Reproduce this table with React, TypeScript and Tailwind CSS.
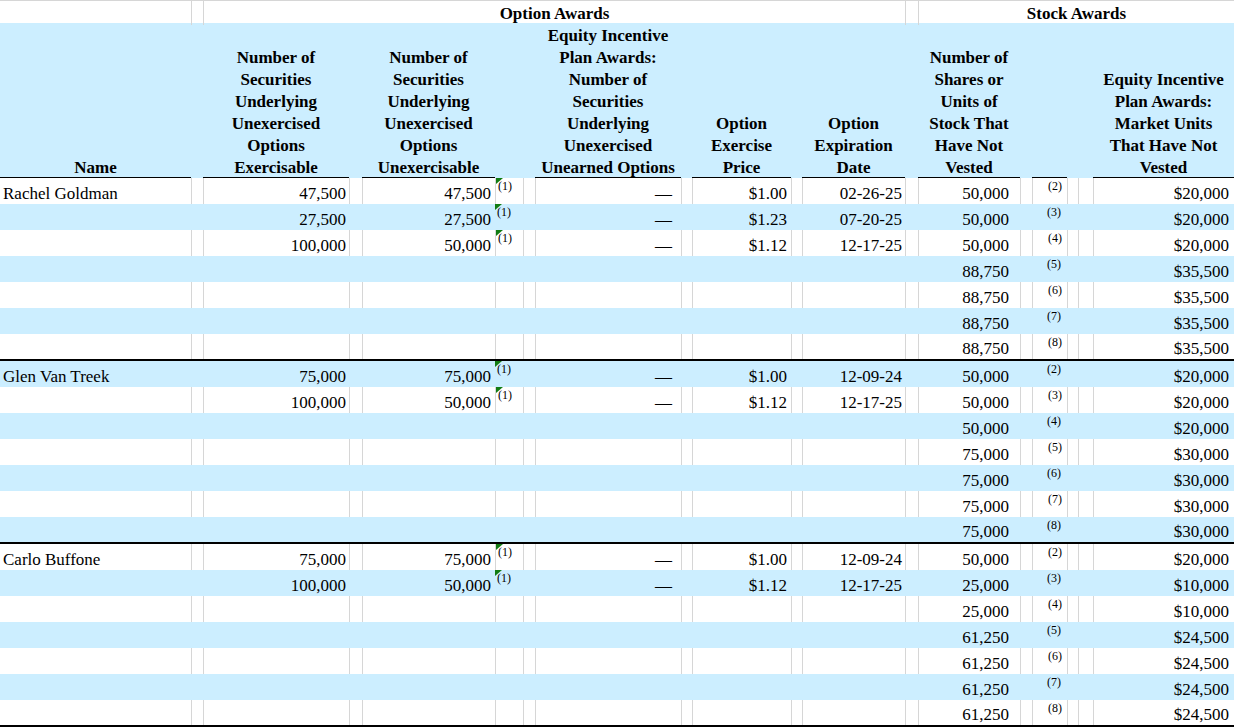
import React from "react";

const GRID =
  "grid grid-cols-[191px_12px_146px_13px_133px_28px_12px_146px_11px_99px_11px_103px_13px_102px_12px_35px_11px_15px_141px]";

type Row = {
  name?: string;
  ex?: string;
  unex?: string;
  price?: string;
  date?: string;
  shares: string;
  fn: string;
  value: string;
};

const GROUPS: Row[][] = [
  [
    { name: "Rachel Goldman", ex: "47,500", unex: "47,500", price: "$1.00", date: "02-26-25", shares: "50,000", fn: "(2)", value: "$20,000" },
    { ex: "27,500", unex: "27,500", price: "$1.23", date: "07-20-25", shares: "50,000", fn: "(3)", value: "$20,000" },
    { ex: "100,000", unex: "50,000", price: "$1.12", date: "12-17-25", shares: "50,000", fn: "(4)", value: "$20,000" },
    { shares: "88,750", fn: "(5)", value: "$35,500" },
    { shares: "88,750", fn: "(6)", value: "$35,500" },
    { shares: "88,750", fn: "(7)", value: "$35,500" },
    { shares: "88,750", fn: "(8)", value: "$35,500" },
  ],
  [
    { name: "Glen Van Treek", ex: "75,000", unex: "75,000", price: "$1.00", date: "12-09-24", shares: "50,000", fn: "(2)", value: "$20,000" },
    { ex: "100,000", unex: "50,000", price: "$1.12", date: "12-17-25", shares: "50,000", fn: "(3)", value: "$20,000" },
    { shares: "50,000", fn: "(4)", value: "$20,000" },
    { shares: "75,000", fn: "(5)", value: "$30,000" },
    { shares: "75,000", fn: "(6)", value: "$30,000" },
    { shares: "75,000", fn: "(7)", value: "$30,000" },
    { shares: "75,000", fn: "(8)", value: "$30,000" },
  ],
  [
    { name: "Carlo Buffone", ex: "75,000", unex: "75,000", price: "$1.00", date: "12-09-24", shares: "50,000", fn: "(2)", value: "$20,000" },
    { ex: "100,000", unex: "50,000", price: "$1.12", date: "12-17-25", shares: "25,000", fn: "(3)", value: "$10,000" },
    { shares: "25,000", fn: "(4)", value: "$10,000" },
    { shares: "61,250", fn: "(5)", value: "$24,500" },
    { shares: "61,250", fn: "(6)", value: "$24,500" },
    { shares: "61,250", fn: "(7)", value: "$24,500" },
    { shares: "61,250", fn: "(8)", value: "$24,500" },
  ],
];

const HEADERS: { col: number; lines: string[] }[] = [
  { col: 0, lines: ["Name"] },
  { col: 2, lines: ["Number of", "Securities", "Underlying", "Unexercised", "Options", "Exercisable"] },
  { col: 4, lines: ["Number of", "Securities", "Underlying", "Unexercised", "Options", "Unexercisable"] },
  { col: 7, lines: ["Equity Incentive", "Plan Awards:", "Number of", "Securities", "Underlying", "Unexercised", "Unearned Options"] },
  { col: 9, lines: ["Option", "Exercise", "Price"] },
  { col: 11, lines: ["Option", "Expiration", "Date"] },
  { col: 13, lines: ["Number of", "Shares or", "Units of", "Stock That", "Have Not", "Vested"] },
  { col: 15, lines: [] },
  { col: 18, lines: ["Equity Incentive", "Plan Awards:", "Market Units", "That Have Not", "Vested"] },
];

function Flag() {
  return (
    <svg width="7" height="6" viewBox="0 0 7 6" className="absolute left-0 top-0">
      <path d="M0 0H7L0 6Z" fill="#127c12" />
    </svg>
  );
}

function DataRow({ row, blue, last }: { row: Row; blue: boolean; last: boolean }) {
  const line = blue ? "" : "border-l border-[#d6d6d6]";
  const num = "flex items-end justify-end";
  const cells: React.ReactNode[] = [];
  for (let i = 0; i < 19; i++) {
    const base = i === 0 ? "" : line;
    let content: React.ReactNode = null;
    let cls = "";
    if (i === 0) {
      cls = "flex items-end pl-[3px]";
      content = row.name;
    } else if (i === 2) {
      cls = `${num} pr-[3px]`;
      content = row.ex;
    } else if (i === 4) {
      cls = `${num} pr-[4px]`;
      content = row.unex;
    } else if (i === 5) {
      cls = "relative pl-[2px] pt-[2px] text-[12px] leading-[13px]";
      content = row.unex ? (
        <>
          <Flag />
          (1)
        </>
      ) : null;
    } else if (i === 7) {
      cls = `${num} pr-[9px]`;
      content = row.unex ? "—" : null;
    } else if (i === 9) {
      cls = `${num} pr-[4px]`;
      content = row.price;
    } else if (i === 11) {
      cls = `${num} pr-[3px]`;
      content = row.date;
    } else if (i === 13) {
      cls = `${num} pr-[11px]`;
      content = row.shares;
    } else if (i === 15) {
      cls = "pl-[15px] pt-[2px] text-[12px] leading-[13px]";
      content = row.fn;
    } else if (i === 18) {
      cls = `${num} pr-[5px]`;
      content = row.value;
    }
    cells.push(
      <div key={i} className={`${base} ${cls} whitespace-nowrap`}>
        {content}
      </div>
    );
  }
  return (
    <div
      className={`${GRID} ${blue ? "bg-[#cceeff]" : "bg-white"} ${
        last ? "h-[27px] border-b-2 border-black" : "h-[26px]"
      }`}
    >
      {cells}
    </div>
  );
}

export default function App() {
  let idx = 0;
  return (
    <div className="w-[1234px] h-[727px] overflow-hidden bg-white text-black font-['Liberation_Serif','Times_New_Roman',serif] text-[17px] leading-[20px]">
      {/* group titles */}
      <div className={`${GRID} h-[23px] border-t border-[#d6d6d6] font-bold leading-[22px]`}>
        <div />
        <div className="border-l border-[#d6d6d6]" />
        <div className="col-span-10 border-l border-[#d6d6d6] pt-[2px] text-center">Option Awards</div>
        <div className="border-l border-[#d6d6d6]" />
        <div className="col-span-6 border-l border-[#d6d6d6] pt-[2px] text-center">Stock Awards</div>
      </div>

      {/* column headings */}
      <div className={`${GRID} h-[155px] bg-[#cceeff] font-bold leading-[22px]`}>
        {Array.from({ length: 19 }).map((_, i) => {
          const h = HEADERS.find((x) => x.col === i);
          if (!h) return <div key={i} />;
          return (
            <div key={i} className="flex flex-col justify-end items-center text-center border-b border-black">
              <div className="mb-[-2px] whitespace-nowrap">
                {h.lines.map((l) => (
                  <div key={l}>{l}</div>
                ))}
              </div>
            </div>
          );
        })}
      </div>

      {GROUPS.map((g, gi) => (
        <div key={gi}>
          {g.map((row, ri) => {
            const blue = idx % 2 === 1;
            idx++;
            return <DataRow key={ri} row={row} blue={blue} last={ri === g.length - 1} />;
          })}
        </div>
      ))}
    </div>
  );
}
